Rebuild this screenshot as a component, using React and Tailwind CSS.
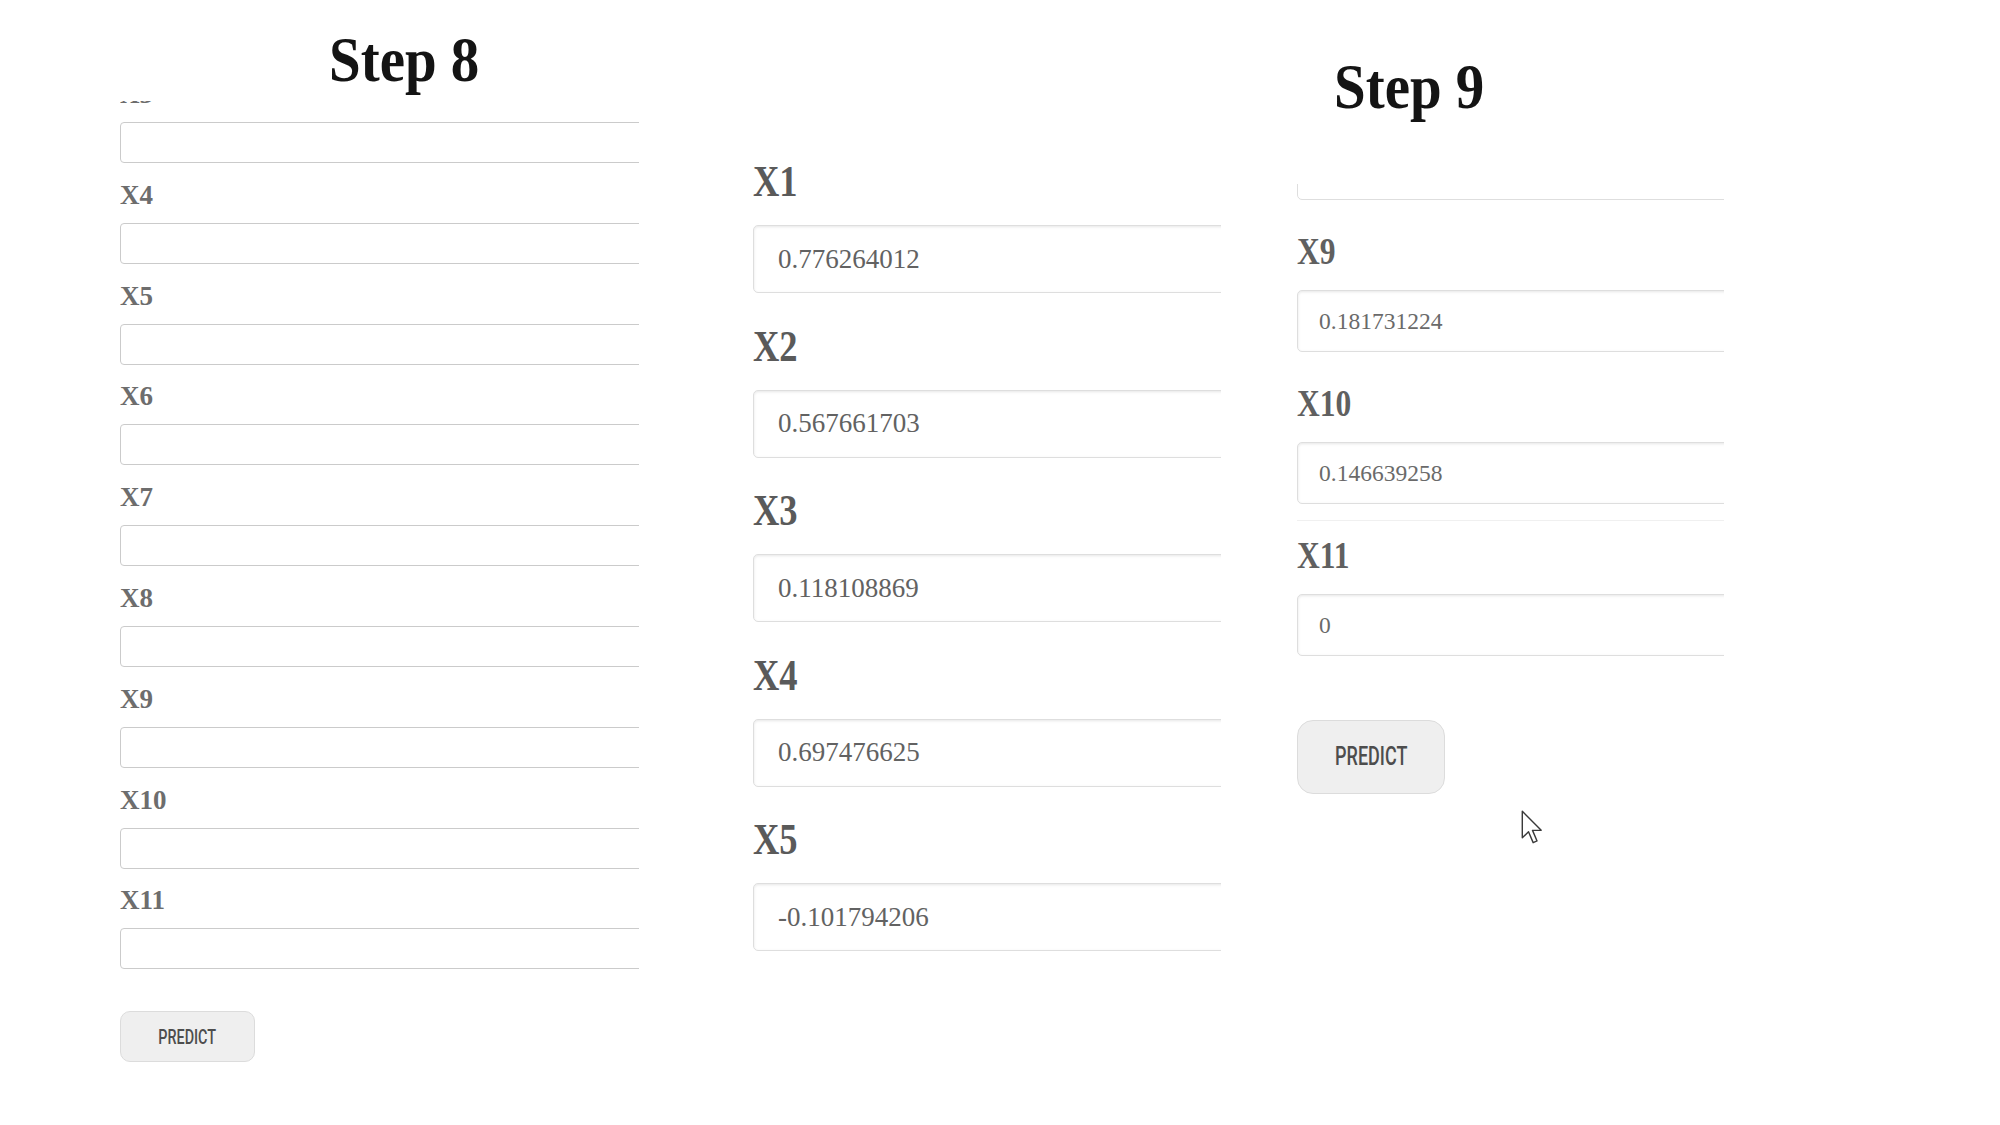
import React from 'react';

const serif = "font-['Liberation_Serif','Times_New_Roman',serif]";
const narrow = "font-['Roboto','Liberation_Sans',sans-serif]";

const stepEight = ['X3', 'X4', 'X5', 'X6', 'X7', 'X8', 'X9', 'X10', 'X11'];

const middleValues = [
  { label: 'X1', value: '0.776264012' },
  { label: 'X2', value: '0.567661703' },
  { label: 'X3', value: '0.118108869' },
  { label: 'X4', value: '0.697476625' },
  { label: 'X5', value: '-0.101794206' },
];

const stepNine = [
  { label: 'X9', value: '0.181731224' },
  { label: 'X10', value: '0.146639258', divider: true },
  { label: 'X11', value: '0' },
];

const Heading = ({ children, className }) => (
  <h1 className={`${serif} text-[64px] leading-[64px] font-bold text-[#141414] ${className}`}>
    <span className="inline-block origin-left scale-x-[0.89]">{children}</span>
  </h1>
);

const PredictButton = ({ className, textClass }) => (
  <button
    className={`flex items-center justify-center border border-[#dcdcdc] bg-[#efefef] ${className}`}
  >
    <span className={`${narrow} inline-block font-medium text-[#4d4d4d] scale-x-[0.72] ${textClass}`}>
      PREDICT
    </span>
  </button>
);

const Cursor = () => (
  <svg
    className="absolute left-[1521px] top-[810px] w-[22px] h-[35px]"
    viewBox="0 0 17 27"
    fill="none"
  >
    <path
      d="M1 1 L1 21.5 L5.8 16.8 L9.4 25.2 L12.4 23.9 L8.9 15.7 L15.6 15.7 Z"
      fill="#ffffff"
      stroke="#3a3a3a"
      strokeWidth="1.1"
      strokeLinejoin="round"
    />
  </svg>
);

export default function App() {
  return (
    <div className="relative w-[2000px] h-[1125px] bg-white flex items-start overflow-hidden">
      {/* Step 8 - empty form */}
      <div className="ml-[120px] w-[519px] flex flex-col">
        <Heading className="mt-[28px] pl-[209px]">Step 8</Heading>
        <div className="mt-[9px] overflow-hidden">
          <div className="-mt-[20px] flex flex-col gap-[18.8px]">
            {stepEight.map((label) => (
              <div key={label} className="flex flex-col">
                <label className={`${serif} text-[27px] leading-[27px] font-bold text-[#6d6d6d] mb-[14px]`}>
                  {label}
                </label>
                <input
                  readOnly
                  className="h-[41px] w-[560px] shrink-0 border border-[#cbcbcb] rounded-[4px] bg-white"
                />
              </div>
            ))}
          </div>
          <PredictButton
            className="mt-[42px] w-[135px] h-[51px] rounded-[10px]"
            textClass="text-[20px]"
          />
        </div>
      </div>

      {/* Middle - filled X1..X5 */}
      <div className="ml-[114px] w-[468px] overflow-hidden pt-[160px] flex flex-col gap-[31.5px]">
        {middleValues.map((f) => (
          <div key={f.label} className="flex flex-col">
            <label className={`${serif} text-[44px] leading-[44px] font-bold text-[#5a5a5a] mb-[21px]`}>
              <span className="inline-block origin-left scale-x-[0.83]">{f.label}</span>
            </label>
            <input
              readOnly
              value={f.value}
              className={`${serif} h-[68px] w-[520px] shrink-0 border border-[#dedede] rounded-[5px] bg-white pl-[24px] text-[27px] text-[#626262] shadow-[inset_0_1px_3px_rgba(0,0,0,0.10)] outline-none`}
            />
          </div>
        ))}
      </div>

      {/* Step 9 - filled X9..X11 */}
      <div className="ml-[76px] w-[427px] flex flex-col">
        <Heading className="mt-[55px] pl-[37px]">Step 9</Heading>
        <div className="mt-[65px] overflow-hidden">
          <div className="-mt-[46px] flex flex-col gap-[32px]">
            <input
              readOnly
              className="h-[62px] w-[470px] shrink-0 border border-[#dedede] rounded-[5px] bg-white"
            />
            {stepNine.map((f) => (
              <div key={f.label} className="flex flex-col">
                <label className={`${serif} text-[38px] leading-[38px] font-bold text-[#606060] mb-[20px]`}>
                  <span className="inline-block origin-left scale-x-[0.83]">{f.label}</span>
                </label>
                <input
                  readOnly
                  value={f.value}
                  className={`${serif} h-[62px] w-[470px] shrink-0 border border-[#dedede] rounded-[5px] bg-white pl-[21px] text-[23.5px] text-[#6a6a6a] shadow-[inset_0_1px_3px_rgba(0,0,0,0.10)] outline-none`}
                />
                {f.divider && <div className="mt-[16px] -mb-[17px] h-px bg-[#f0f0f0]" />}
              </div>
            ))}
          </div>
          <PredictButton
            className="mt-[64px] w-[148px] h-[74px] rounded-[16px]"
            textClass="text-[25px]"
          />
        </div>
      </div>

      <Cursor />
    </div>
  );
}
